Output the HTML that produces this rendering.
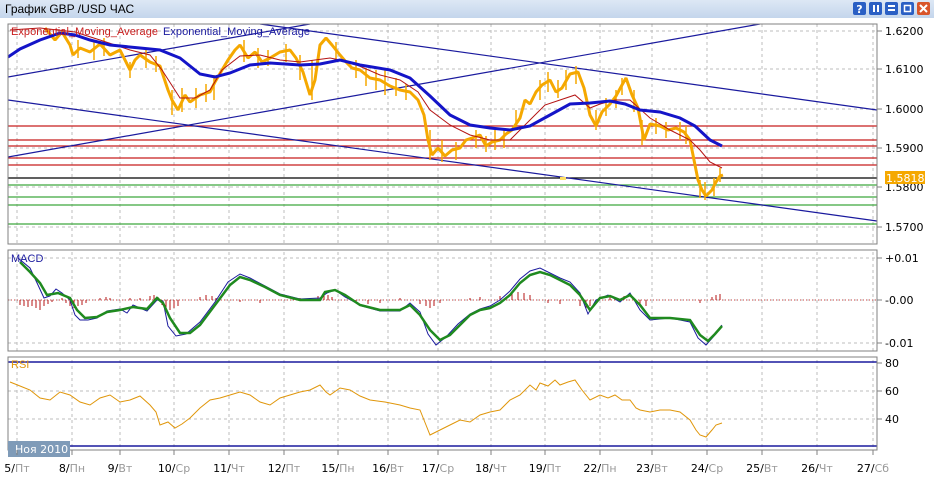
<!DOCTYPE html>
<html><head><meta charset="utf-8"><style>
body{margin:0;width:934px;height:480px;overflow:hidden;background:#fff;font-family:"Liberation Sans","DejaVu Sans",sans-serif}
</style></head><body>
<svg width="934" height="480" viewBox="0 0 934 480" xmlns="http://www.w3.org/2000/svg" font-family="'DejaVu Sans','Liberation Sans',sans-serif">
<defs><linearGradient id="tb" x1="0" y1="0" x2="0" y2="1"><stop offset="0" stop-color="#dde8f5"/><stop offset="1" stop-color="#c4d6ec"/></linearGradient>
<clipPath id="cm"><rect x="8" y="24" width="869" height="220"/></clipPath>
<clipPath id="cd"><rect x="8" y="250" width="869" height="101"/></clipPath>
<clipPath id="cr"><rect x="8" y="357" width="869" height="93"/></clipPath></defs>
<rect x="0" y="0" width="934" height="18" fill="url(#tb)"/>
<text x="5" y="13" font-size="12" fill="#000" font-family="'Liberation Sans',sans-serif">График GBP /USD  ЧАС</text>
<g>
<rect x="853" y="2" width="13" height="13" rx="2" fill="#2a5fc4"/><text x="859.5" y="13" font-size="11" font-weight="bold" fill="#fff" text-anchor="middle">?</text>
<rect x="869" y="2" width="13" height="13" rx="2" fill="#2a5fc4"/><rect x="873" y="5" width="2" height="7" fill="#fff"/><rect x="877" y="5" width="2" height="7" fill="#fff"/>
<rect x="885" y="2" width="13" height="13" rx="2" fill="#2a5fc4"/><rect x="888" y="5" width="7" height="2" fill="#fff"/><rect x="888" y="9" width="7" height="2" fill="#fff"/>
<rect x="901" y="2" width="13" height="13" rx="2" fill="#2a5fc4"/><rect x="904.5" y="5.5" width="6" height="6" fill="none" stroke="#fff" stroke-width="1.5"/>
<rect x="917" y="2" width="13" height="13" rx="2" fill="#d9552a"/><path d="M920 5 L927 12 M927 5 L920 12" stroke="#fff" stroke-width="2"/>
</g>
<g stroke="#bdbdbd" stroke-dasharray="3,3" stroke-width="1">
<path d="M17 24V450M72 24V450M120 24V450M174 24V450M229 24V450M284 24V450M338 24V450M388 24V450M438 24V450M491 24V450M545 24V450M600 24V450M652 24V450M707 24V450M762 24V450M817 24V450M873 24V450"/>
<path d="M8 31H877M8 69H877M8 109H877M8 148H877M8 187H877M8 227H877M8 258H877M8 300H877M8 343H877M8 391H877M8 419H877"/>
</g>
<rect x="0" y="244" width="877" height="6" fill="#fff"/><rect x="0" y="351" width="877" height="6" fill="#fff"/>
<g clip-path="url(#cm)">
<g stroke-width="1.2">
<path d="M8 126H877M8 140H877M8 146H877M8 158H877M8 165H877" stroke="#c81e1e"/>
<path d="M8 178H877" stroke="#000"/>
<path d="M8 185H877M8 197H877M8 205H877M8 224H877" stroke="#3fa63f"/>
</g>
<g stroke="#1a1a9e" stroke-width="1.2" fill="none">
<path d="M8 77L310 24"/><path d="M8 157L760 24"/><path d="M8 100L877 221"/><path d="M260 24L877 110"/>
</g>
<polyline fill="none" stroke="#f5a800" stroke-width="3" stroke-linejoin="bevel" points="45,28 55,40 62,32 70,45 73,55 80,48 90,52 100,44 110,55 120,50 130,70 135,60 140,55 150,62 160,66 168,90 172,100 178,110 185,95 190,102 200,95 210,92 215,82 222,70 228,60 235,50 240,45 248,58 255,52 262,62 270,58 280,52 290,50 296,58 303,72 310,95 315,80 320,45 326,38 332,45 340,55 346,62 352,68 360,70 370,78 380,80 390,86 400,90 410,92 418,100 424,115 428,140 432,155 438,148 445,156 452,150 460,148 466,140 472,138 480,135 486,146 492,142 500,140 506,134 512,130 520,118 525,100 530,104 536,92 542,85 550,80 556,92 562,88 570,74 578,72 584,88 590,115 596,126 602,112 610,104 616,96 622,85 626,78 632,95 638,108 644,140 650,124 660,126 668,130 676,128 684,132 690,140 694,160 698,180 702,190 706,196 712,190 716,182 720,176 723,175"/>
<g stroke="#f5a800" stroke-width="1.5"><path d="M130 62V78M172 90V115M214 75V100M300 55V80M312 60V100M385 70V95M430 130V160M495 130V150M540 80V100M596 110V130M642 120V145M705 182V200M720 168V182M622 78V95M78 40V58M94 42V60M104 38V56M146 50V68M156 56V72M182 88V112M196 88V108M206 84V102M244 40V62M258 48V68M268 50V66M286 44V62M336 42V60M356 60V78M366 68V86M376 70V90M396 78V96M406 84V100M442 140V162M456 142V160M476 130V148M486 136V152M504 130V148M516 110V130M548 72V92M558 80V98M566 70V90M576 66V84M606 98V116M616 90V108M634 90V112M656 118V134M666 122V138M680 122V140M686 126V144M700 180V198M714 178V196"/></g>
<polyline fill="none" stroke="#b41414" stroke-width="1" points="10,30 40,28 75,32 100,40 130,50 150,55 162,70 180,98 195,98 210,90 222,70 240,56 260,55 280,60 300,62 330,58 350,62 380,75 400,80 418,92 430,110 450,125 470,135 490,140 510,140 520,130 530,120 545,105 560,100 575,95 590,108 600,104 615,100 630,100 650,118 670,130 690,140 700,150 710,162 722,168"/>
<polyline fill="none" stroke="#1414c8" stroke-width="3" points="8,57 20,49 40,40 60,33 75,35 90,40 110,45 140,48 160,50 180,58 200,74 215,77 230,73 250,65 270,63 300,65 320,64 340,60 360,65 390,70 410,78 430,96 450,115 470,125 490,128 510,130 530,126 550,115 570,104 590,103 610,101 625,104 640,110 660,112 680,118 695,126 710,140 722,146"/>
<text x="11" y="35" font-size="11" fill="#c81e1e" font-family="'Liberation Sans',sans-serif" textLength="147">Exponential_Moving_Average</text>
<text x="163" y="35" font-size="11" fill="#1a1a9e" font-family="'Liberation Sans',sans-serif" textLength="147">Exponential_Moving_Average</text>
<rect x="560" y="177" width="6" height="3" fill="#ffe066"/>
</g>
<rect x="8" y="24" width="869" height="220" fill="none" stroke="#808080"/>
<g clip-path="url(#cd)">
<path d="M8 300H877" stroke="#d04040" stroke-width="1" stroke-dasharray="1,2"/>
<g stroke="#b41414" stroke-width="1">
<path d="M20 300v5M24 300v6M28 300v7M32 300v6M36 300v8M40 300v10M44 300v6M48 300v4M52 300v2M62 300v-2M66 300v3M70 300v6M74 300v8M78 300v6M82 300v5M86 300v3M100 300v-2M106 300v-3M110 300v-2M130 300v-2M140 300v-2M150 300v-4M154 300v-5M158 300v-3M162 300v5M166 300v8M170 300v10M174 300v8M178 300v6M200 300v-3M206 300v-5M212 300v-4M216 300v-2M240 300v2M260 300v3M300 300v-2M318 300v-4M324 300v-7M328 300v-5M332 300v-3M356 300v3M368 300v4M380 300v3M400 300v-2M420 300v4M426 300v6M430 300v8M434 300v6M440 300v3M470 300v-2M480 300v-3M500 300v-4M512 300v-6M518 300v-8M524 300v-7M530 300v-5M548 300v3M560 300v4M580 300v6M586 300v8M590 300v6M610 300v-3M624 300v-4M640 300v5M646 300v6M700 300v3M712 300v-3M716 300v-5M720 300v-6"/>
</g>
<polyline fill="none" stroke="#1a1a9e" stroke-width="1" points="18,258 30,268 38,285 44,298 50,296 56,289 62,293 70,300 75,315 80,320 88,320 97,318 107,311 120,309 127,313 133,305 147,311 157,300 163,301 168,326 176,336 186,334 200,322 215,302 228,282 240,274 250,278 265,286 280,294 300,299 320,298 327,293 335,290 345,297 362,306 380,311 400,311 410,303 420,312 428,334 436,345 446,337 458,324 470,314 480,309 490,306 500,300 510,291 520,279 530,271 540,268 550,273 560,278 570,282 580,293 588,314 596,300 608,295 620,302 630,293 640,310 650,320 670,318 690,322 698,338 706,345 714,336 722,325"/>
<polyline fill="none" stroke="#1f8a1f" stroke-width="2.5" points="20,262 30,272 40,283 47,295 58,293 70,298 77,310 85,318 97,317 107,312 120,310 133,307 147,309 157,298 163,303 170,318 180,333 190,333 200,325 215,305 230,285 240,277 250,280 265,287 280,295 300,300 320,300 325,292 335,290 345,295 360,305 380,310 400,310 410,305 420,315 430,330 440,340 450,335 460,325 470,315 480,310 490,308 500,303 510,295 520,283 530,275 540,272 550,275 560,280 570,285 580,295 590,310 600,298 610,296 620,300 630,295 640,305 650,318 670,318 690,320 700,335 708,341 715,334 722,326"/>
<text x="11" y="262" font-size="11" fill="#1a1a9e" font-family="'Liberation Sans',sans-serif">MACD</text>
</g>
<rect x="8" y="250" width="869" height="101" fill="none" stroke="#808080"/>
<g clip-path="url(#cr)">
<path d="M8 362H877M8 446H877" stroke="#1a1a9e" stroke-width="1.5"/>
<polyline fill="none" stroke="#e0960a" stroke-width="1" points="10,382 20,386 30,390 40,398 50,400 60,392 70,395 80,402 90,405 100,398 110,395 120,402 130,400 140,396 150,405 156,412 160,425 168,422 175,428 182,424 190,418 200,408 210,400 220,398 230,395 240,392 250,395 260,402 270,405 280,398 290,395 300,392 310,390 320,385 326,392 330,395 340,388 350,390 360,396 370,400 385,402 400,405 410,408 420,410 426,425 430,435 436,432 440,430 450,425 460,420 470,422 480,415 490,412 500,410 510,400 520,395 530,385 536,390 540,383 548,386 555,380 560,385 568,382 575,380 582,390 590,400 600,395 608,398 615,395 622,400 630,400 636,408 640,410 650,412 660,410 670,410 680,412 690,420 696,430 700,435 706,437 712,430 716,425 722,423"/>
<text x="11" y="368" font-size="11" fill="#e0960a" font-family="'Liberation Sans',sans-serif">RSI</text>
</g>
<rect x="8" y="357" width="869" height="93" fill="none" stroke="#808080"/>
<rect x="8" y="441" width="62" height="16" fill="#7f9bb8"/>
<text x="15" y="453" font-size="11" fill="#fff">Ноя 2010</text>
<g stroke="#808080"><path d="M877 31h5M877 69h5M877 109h5M877 148h5M877 187h5M877 227h5M877 258h5M877 300h5M877 343h5M877 363h5M877 391h5M877 419h5"/></g>
<g font-size="11" fill="#000">
<text x="885" y="35">1.6200</text><text x="885" y="73">1.6100</text><text x="885" y="113">1.6000</text><text x="885" y="152">1.5900</text><text x="885" y="191">1.5800</text><text x="885" y="231">1.5700</text>
<text x="885" y="262">+0.01</text><text x="885" y="304">-0.00</text><text x="885" y="347">-0.01</text>
<text x="885" y="367">80</text><text x="885" y="395">60</text><text x="885" y="423">40</text>
</g>
<rect x="885" y="171" width="40" height="13" fill="#f5a800"/><text x="886" y="182" font-size="11" fill="#fff">1.5818</text>
<g stroke="#808080"><path d="M17 450v5M72 450v5M120 450v5M174 450v5M229 450v5M284 450v5M338 450v5M388 450v5M438 450v5M491 450v5M545 450v5M600 450v5M652 450v5M707 450v5M762 450v5M817 450v5M873 450v5"/></g>
<g font-size="11" fill="#000" text-anchor="middle">
<text x="17" y="472">5/<tspan fill="#999">Пт</tspan></text><text x="72" y="472">8/<tspan fill="#999">Пн</tspan></text><text x="120" y="472">9/<tspan fill="#999">Вт</tspan></text><text x="174" y="472">10/<tspan fill="#999">Ср</tspan></text><text x="229" y="472">11/<tspan fill="#999">Чт</tspan></text><text x="284" y="472">12/<tspan fill="#999">Пт</tspan></text><text x="338" y="472">15/<tspan fill="#999">Пн</tspan></text><text x="388" y="472">16/<tspan fill="#999">Вт</tspan></text><text x="438" y="472">17/<tspan fill="#999">Ср</tspan></text><text x="491" y="472">18/<tspan fill="#999">Чт</tspan></text><text x="545" y="472">19/<tspan fill="#999">Пт</tspan></text><text x="600" y="472">22/<tspan fill="#999">Пн</tspan></text><text x="652" y="472">23/<tspan fill="#999">Вт</tspan></text><text x="707" y="472">24/<tspan fill="#999">Ср</tspan></text><text x="762" y="472">25/<tspan fill="#999">Вт</tspan></text><text x="817" y="472">26/<tspan fill="#999">Чт</tspan></text><text x="873" y="472">27/<tspan fill="#999">Сб</tspan></text>
</g>
</svg>
</body></html>
